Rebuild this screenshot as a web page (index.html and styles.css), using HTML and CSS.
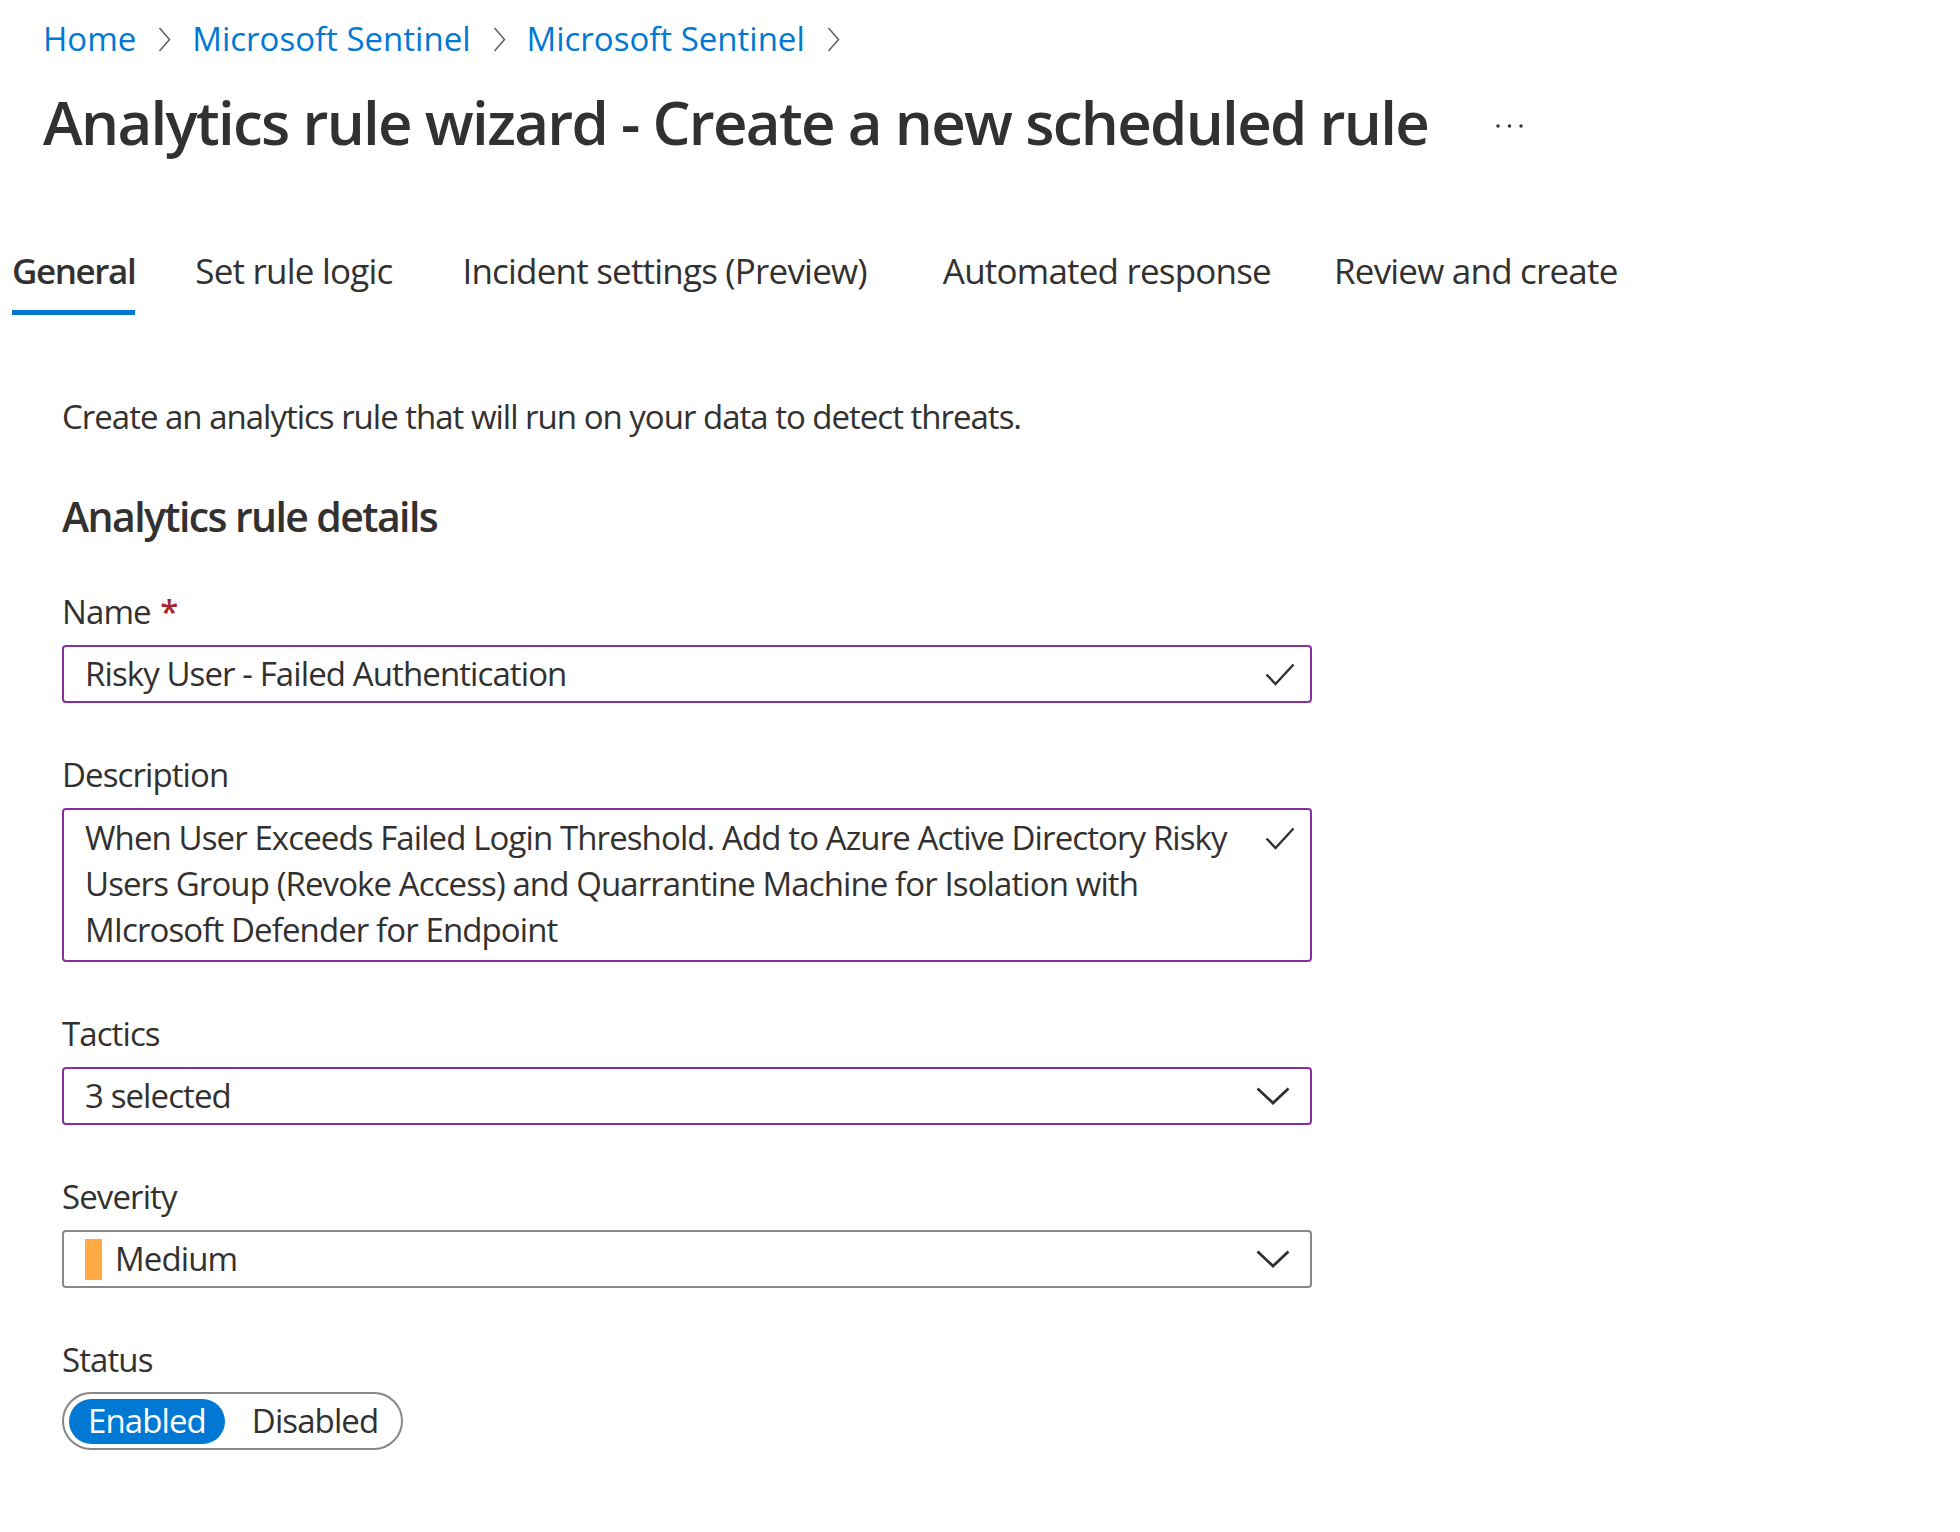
FILE: index.html
```html
<!DOCTYPE html>
<html lang="en">
<head>
<meta charset="utf-8">
<title>Analytics rule wizard</title>
<link rel="stylesheet" href="styles.css">
</head>
<body>
<div class="page">
  <nav class="breadcrumb">
    <a class="crumb" href="#">Home</a>
    <svg class="crumb-sep" viewBox="0 0 13 25" width="13" height="25"><path d="M1.5 1 L11.5 12.5 L1.5 24" fill="none" stroke="#605e5c" stroke-width="1.5"/></svg>
    <a class="crumb" href="#">Microsoft Sentinel</a>
    <svg class="crumb-sep" viewBox="0 0 13 25" width="13" height="25"><path d="M1.5 1 L11.5 12.5 L1.5 24" fill="none" stroke="#605e5c" stroke-width="1.5"/></svg>
    <a class="crumb" href="#">Microsoft Sentinel</a>
    <svg class="crumb-sep" viewBox="0 0 13 25" width="13" height="25"><path d="M1.5 1 L11.5 12.5 L1.5 24" fill="none" stroke="#605e5c" stroke-width="1.5"/></svg>
  </nav>
  <div class="title-row">
    <h1 class="title">Analytics rule wizard - Create a new scheduled rule</h1>
    <span class="more" aria-label="More">
      <svg viewBox="0 0 28 4" width="28" height="4"><circle cx="2" cy="2" r="1.7" fill="#323130"/><circle cx="13.5" cy="2" r="1.7" fill="#323130"/><circle cx="25" cy="2" r="1.7" fill="#323130"/></svg>
    </span>
  </div>

  <div class="tabs">
    <div class="tab active">General</div>
    <div class="tab">Set rule logic</div>
    <div class="tab">Incident settings (Preview)</div>
    <div class="tab">Automated response</div>
    <div class="tab">Review and create</div>
  </div>

  <div class="form">
    <p class="intro">Create an analytics rule that will run on your data to detect threats.</p>
    <h2 class="section">Analytics rule details</h2>

    <div class="field">
      <div class="label">Name <span class="req">*</span></div>
      <div class="box valid">
        <span class="value">Risky User - Failed Authentication</span>
        <svg class="check" viewBox="0 0 30 23" width="30" height="23"><path d="M1.5 11.5 L10.5 21 L28.5 1.5" fill="none" stroke="#323130" stroke-width="2.4"/></svg>
      </div>
    </div>

    <div class="field">
      <div class="label">Description</div>
      <div class="box valid multi">
        <span class="value">When User Exceeds Failed Login Threshold. Add to Azure Active Directory Risky Users Group (Revoke Access) and Quarrantine Machine for Isolation with MIcrosoft Defender for Endpoint</span>
        <svg class="check" viewBox="0 0 30 23" width="30" height="23"><path d="M1.5 11.5 L10.5 21 L28.5 1.5" fill="none" stroke="#323130" stroke-width="2.4"/></svg>
      </div>
    </div>

    <div class="field">
      <div class="label">Tactics</div>
      <div class="box valid">
        <span class="value">3 selected</span>
        <svg class="chev" viewBox="0 0 34 18" width="34" height="18"><path d="M1.5 1.5 L17 16 L32.5 1.5" fill="none" stroke="#323130" stroke-width="2.8"/></svg>
      </div>
    </div>

    <div class="field">
      <div class="label">Severity</div>
      <div class="box plain">
        <span class="sev-bar"></span>
        <span class="value">Medium</span>
        <svg class="chev" viewBox="0 0 34 18" width="34" height="18"><path d="M1.5 1.5 L17 16 L32.5 1.5" fill="none" stroke="#323130" stroke-width="2.8"/></svg>
      </div>
    </div>

    <div class="field">
      <div class="label">Status</div>
      <div class="toggle">
        <span class="opt on">Enabled</span>
        <span class="opt">Disabled</span>
      </div>
    </div>
  </div>
</div>
</body>
</html>
```

FILE: styles.css
```css
* { box-sizing: border-box; }
html, body { margin: 0; padding: 0; background: #ffffff; }
body {
  font-family: "Open Sans", "Noto Sans", "Liberation Sans", sans-serif;
  color: #323130;
  width: 1960px;
  height: 1532px;
  overflow: hidden;
}
.page { padding: 19px 0 0 0; }

.breadcrumb {
  display: flex;
  align-items: center;
  padding-left: 43px;
  height: 40px;
  font-size: 33px;
  line-height: 40px;
}
.crumb { color: #0078d4; text-decoration: none; }
.crumb-sep { margin: 0 21px 0 22px; flex: none; }

.title-row {
  display: flex;
  align-items: center;
  padding-left: 43px;
  margin-top: 27px;
  height: 72px;
}
.title {
  margin: 0;
  font-size: 60px;
  line-height: 72px;
  font-weight: 600;
  letter-spacing: -1.7px;
  color: #323130;
}
.more { margin-left: 68px; display: flex; align-items: center; padding-top: 8px; }

.tabs {
  display: flex;
  padding-left: 12px;
  margin-top: 91px;
}
.tab {
  font-size: 35px;
  line-height: 44px;
  letter-spacing: -0.8px;
  padding-bottom: 17px;
  border-bottom: 5px solid transparent;
  color: #323130;
}
.tab:nth-child(1) { margin-right: 60px; }
.tab:nth-child(2) { margin-right: 70px; }
.tab:nth-child(3) { margin-right: 76px; }
.tab:nth-child(4) { margin-right: 63px; }
.tab.active {
  font-weight: 600;
  letter-spacing: -1.4px;
  border-bottom-color: #0078d4;
}

.form { padding-left: 62px; width: 1312px; }
.intro {
  margin: 82px 0 0 0;
  font-size: 33px;
  line-height: 40px;
  letter-spacing: -1px;
}
.section {
  margin: 54px 0 0 0;
  font-size: 41px;
  line-height: 50px;
  font-weight: 600;
  letter-spacing: -1.6px;
}
.field { margin-top: 51px; }
.field + .field { margin-top: 52px; }
.label {
  font-size: 33px;
  line-height: 40px;
  letter-spacing: -0.9px;
}
.req { color: #a4262c; font-weight: 600; margin-left: 2px; }

.box {
  margin-top: 13px;
  height: 58px;
  border: 2px solid #8a2da5;
  border-radius: 4px;
  display: flex;
  align-items: center;
  padding: 0 15px 0 21px;
  font-size: 33px;
  line-height: 40px;
  letter-spacing: -0.9px;
}
.box.plain { border-color: #8a8886; }
.box .value { flex: 1; }
.box.multi {
  height: 154px;
  align-items: flex-start;
  padding-top: 5px;
  line-height: 46px;
}
.box.multi .value { padding-right: 30px; }
.check { flex: none; }
.box.multi .check { margin-top: 12px; }
.chev { flex: none; margin-right: 5px; }
.sev-bar {
  flex: none;
  width: 17px;
  height: 41px;
  background: #ffaa44;
  margin-right: 13px;
}

.toggle {
  margin-top: 12px;
  display: inline-flex;
  align-items: center;
  height: 58px;
  border: 2px solid #8a8886;
  border-radius: 29px;
  padding: 0 23px 0 5px;
  font-size: 33px;
  line-height: 40px;
  letter-spacing: -0.9px;
}
.opt { padding: 2px 0 3px 0; border-radius: 23px; }
.opt.on { background: #0078d4; color: #ffffff; padding: 2px 19px 3px 19px; margin-right: 27px; }
```
